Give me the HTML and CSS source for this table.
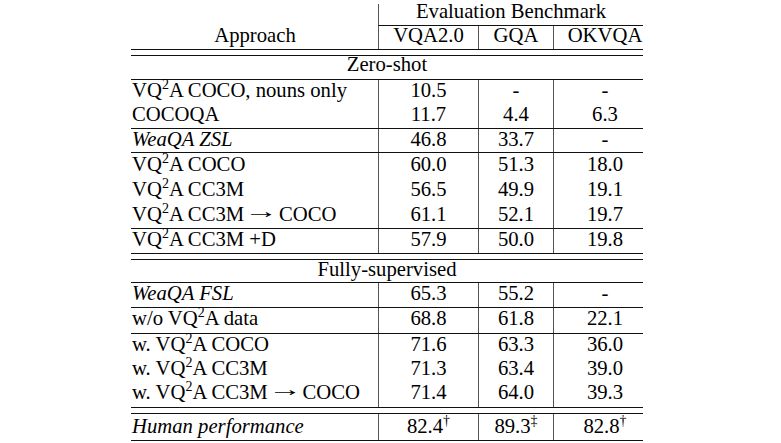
FILE: index.html
```html
<!DOCTYPE html>
<html>
<head>
<meta charset="utf-8">
<title>Evaluation Benchmark</title>
<link rel="stylesheet" href="styles.css">
</head>
<body>
<div class="tbl">
  <div class="row head1">
    <div class="c a"></div>
    <div class="c n span3">Evaluation Benchmark</div>
  </div>
  <div class="row head2 rule">
    <div class="c a center">Approach</div>
    <div class="c n">VQA2.0</div>
    <div class="c n">GQA</div>
    <div class="c n last">OKVQA</div>
  </div>
  <div class="gap rule"></div>
  <div class="sec sec1 rule">Zero-shot</div>

  <div class="row">
    <div class="c a">VQ<sup>2</sup>A COCO, nouns only</div>
    <div class="c n">10.5</div>
    <div class="c n">-</div>
    <div class="c n last">-</div>
  </div>
  <div class="row rule">
    <div class="c a">COCOQA</div>
    <div class="c n">11.7</div>
    <div class="c n">4.4</div>
    <div class="c n last">6.3</div>
  </div>
  <div class="row r23 rule">
    <div class="c a"><i>WeaQA ZSL</i></div>
    <div class="c n">46.8</div>
    <div class="c n">33.7</div>
    <div class="c n last">-</div>
  </div>
  <div class="row r25">
    <div class="c a">VQ<sup>2</sup>A COCO</div>
    <div class="c n">60.0</div>
    <div class="c n">51.3</div>
    <div class="c n last">18.0</div>
  </div>
  <div class="row r25">
    <div class="c a">VQ<sup>2</sup>A CC3M</div>
    <div class="c n">56.5</div>
    <div class="c n">49.9</div>
    <div class="c n last">19.1</div>
  </div>
  <div class="row r25 rule">
    <div class="c a">VQ<sup>2</sup>A CC3M<span class="arr">→</span>COCO</div>
    <div class="c n">61.1</div>
    <div class="c n">52.1</div>
    <div class="c n last">19.7</div>
  </div>
  <div class="row rule">
    <div class="c a">VQ<sup>2</sup>A CC3M +D</div>
    <div class="c n">57.9</div>
    <div class="c n">50.0</div>
    <div class="c n last">19.8</div>
  </div>
  <div class="gap rule"></div>
  <div class="sec sec2 rule">Fully-supervised</div>

  <div class="row rule">
    <div class="c a"><i>WeaQA FSL</i></div>
    <div class="c n">65.3</div>
    <div class="c n">55.2</div>
    <div class="c n last">-</div>
  </div>
  <div class="row pb4 rule">
    <div class="c a">w/o VQ<sup>2</sup>A data</div>
    <div class="c n">68.8</div>
    <div class="c n">61.8</div>
    <div class="c n last">22.1</div>
  </div>
  <div class="row">
    <div class="c a">w. VQ<sup>2</sup>A COCO</div>
    <div class="c n">71.6</div>
    <div class="c n">63.3</div>
    <div class="c n last">36.0</div>
  </div>
  <div class="row">
    <div class="c a">w. VQ<sup>2</sup>A CC3M</div>
    <div class="c n">71.3</div>
    <div class="c n">63.4</div>
    <div class="c n last">39.0</div>
  </div>
  <div class="row pb4 rule">
    <div class="c a">w. VQ<sup>2</sup>A CC3M<span class="arr">→</span>COCO</div>
    <div class="c n">71.4</div>
    <div class="c n">64.0</div>
    <div class="c n last">39.3</div>
  </div>
  <div class="gap rule"></div>
  <div class="row human rule">
    <div class="c a"><i>Human performance</i></div>
    <div class="c n">82.4<sup>†</sup></div>
    <div class="c n">89.3<sup>‡</sup></div>
    <div class="c n last">82.8<sup>†</sup></div>
  </div>
</div>
</body>
</html>
```
FILE: styles.css
```css
html, body {
  margin: 0;
  padding: 0;
  background: #ffffff;
}

body {
  font-family: "Liberation Serif", "Times New Roman", serif;
  font-size: 20.7px;
  color: #000000;
}

.tbl {
  width: 512px;
  margin: 4px 0 0 131px;
}

.row {
  display: grid;
  grid-template-columns: 247px 100px 75px 90px;
}

.rule {
  border-bottom: 1px solid #111111;
}

.c {
  box-sizing: border-box;
  line-height: 21px;
  padding: 0 0 3px 0;
  white-space: nowrap;
}

.a {
  padding-left: 1px;
}

.center {
  text-align: center;
}

.n {
  border-left: 1px solid #555555;
  text-align: center;
}

.last {
  padding-left: 13px;
}

.span3 {
  grid-column: span 3;
  border-bottom: 1px solid #111111;
}

.head1 .c {
  line-height: 15px;
  padding-bottom: 6px;
}

.head2 .c {
  line-height: 18px;
  padding-bottom: 5px;
}

.gap {
  height: 5px;
}

.sec {
  text-align: center;
  white-space: nowrap;
}

.sec1 {
  line-height: 17px;
  padding-bottom: 6px;
}

.sec2 {
  line-height: 19px;
  padding-bottom: 3px;
}

.r23 .c {
  line-height: 20px;
}

.r25 .c {
  line-height: 22px;
}

.pb4 .c {
  padding-bottom: 4px;
}

.human .c {
  line-height: 24px;
  padding-bottom: 2px;
}

sup {
  font-size: 14px;
  line-height: 0;
  vertical-align: 8px;
}

.arr {
  display: inline-block;
  line-height: 0;
  margin: 0 7px;
  transform: translateY(-3px) scaleX(1.65);
}
```
